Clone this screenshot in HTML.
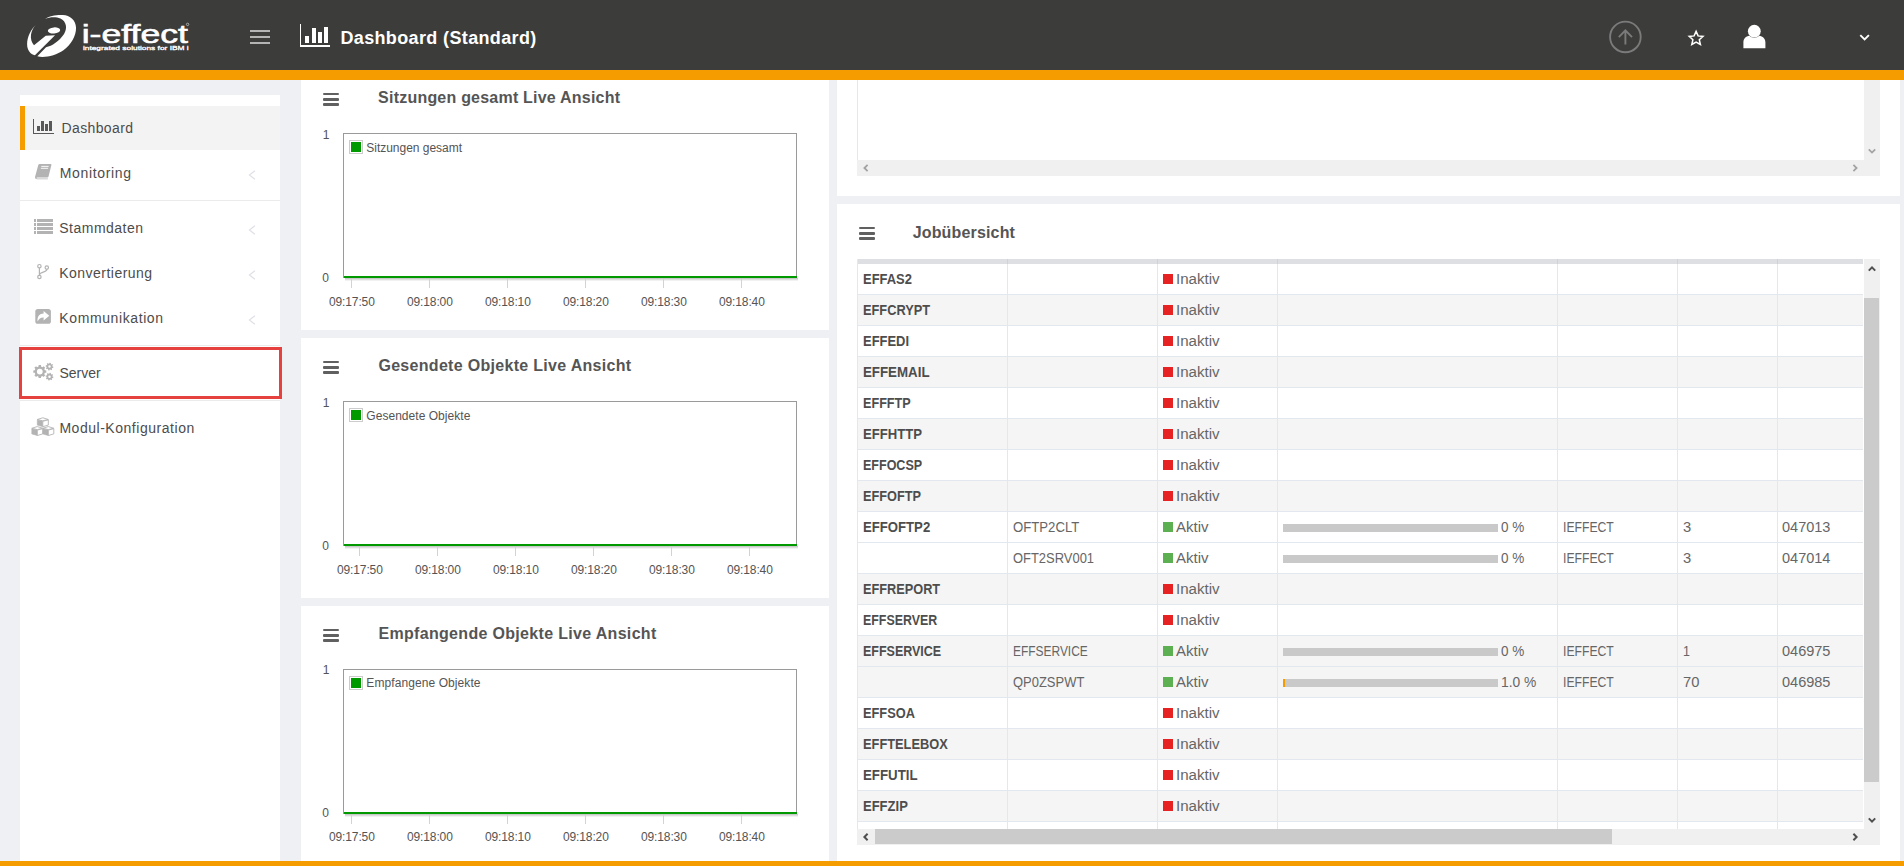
<!DOCTYPE html>
<html><head><meta charset="utf-8"><title>Dashboard (Standard)</title>
<style>
*{box-sizing:border-box;margin:0;padding:0}
html,body{width:1904px;height:866px;overflow:hidden}
body{background:#eff0f4;font-family:"Liberation Sans",sans-serif;position:relative;color:#555}
.abs{position:absolute}
#hdr{left:0;top:0;width:1904px;height:70px;background:#3c3c3b}
#ostripe{left:0;top:70px;width:1904px;height:10px;background:#f59c00}
#bstripe{left:0;top:861px;width:1904px;height:5px;background:#f59c00;z-index:50}
#side{left:20px;top:95px;width:260px;height:780px;background:#fff}
.panel{background:#fff}
.t{position:absolute;white-space:nowrap;line-height:1}
.nav{font-size:14px;color:#4c4c4c}
.ptitle{font-size:16px;font-weight:bold;color:#555}
.ax{font-size:12px;color:#545454}
.lg{font-size:12px;color:#545454}
.td{font-size:13px;color:#666}
.tb{font-size:13px;color:#4d4d4d;font-weight:bold}
.hb{position:absolute;height:2px;background:#606060;border-radius:1px}
</style></head><body>
<div id="hdr" class="abs"></div><div id="ostripe" class="abs"></div><div id="bstripe" class="abs"></div><div id="side" class="abs"></div><div class="abs" style="left:20px;top:106px;width:260px;height:44px;background:#f3f3f3"></div><div class="abs" style="left:20px;top:106px;width:5px;height:44px;background:#f59c00"></div><div class="abs" style="left:20px;top:200px;width:260px;height:1px;background:#ebebeb"></div><div class="abs" style="left:20px;top:345px;width:260px;height:1px;background:#ebebeb"></div><div class="abs" style="left:20px;top:400px;width:260px;height:1px;background:#ebebeb"></div><div class="abs" style="left:19px;top:347px;width:263px;height:52px;border:3px solid #e4413f"></div><div class="abs panel" style="left:301px;top:80px;width:528px;height:250px"></div><div class="abs panel" style="left:301px;top:338px;width:528px;height:260px"></div><div class="abs panel" style="left:301px;top:606px;width:528px;height:270px"></div><div class="abs panel" style="left:837px;top:80px;width:1063px;height:116px"></div><div class="abs panel" style="left:837px;top:204px;width:1063px;height:670px"></div><div class="t" style="left:340.40px;top:29.46px;font-size:18px;color:#fff;font-weight:bold;letter-spacing:0.364px;">Dashboard (Standard)</div><div class="abs" style="left:250px;top:30px;width:20px;height:2px;background:#b4b4b4"></div><div class="abs" style="left:250px;top:36px;width:20px;height:2px;background:#b4b4b4"></div><div class="abs" style="left:250px;top:42px;width:20px;height:2px;background:#b4b4b4"></div><div class="t" style="left:61.50px;top:121.15px;font-size:14px;color:#4c4c4c;letter-spacing:0.381px;">Dashboard</div><div class="t" style="left:59.80px;top:165.75px;font-size:14px;color:#4c4c4c;letter-spacing:0.652px;">Monitoring</div><div class="t" style="left:59.30px;top:220.85px;font-size:14px;color:#4c4c4c;letter-spacing:0.484px;">Stammdaten</div><div class="t" style="left:59.30px;top:265.65px;font-size:14px;color:#4c4c4c;letter-spacing:0.465px;">Konvertierung</div><div class="t" style="left:59.30px;top:310.85px;font-size:14px;color:#4c4c4c;letter-spacing:0.604px;">Kommunikation</div><div class="t" style="left:59.40px;top:365.85px;font-size:14px;color:#4c4c4c;">Server</div><div class="t" style="left:59.40px;top:420.85px;font-size:14px;color:#4c4c4c;letter-spacing:0.531px;">Modul-Konfiguration</div><div class="t" style="left:378.10px;top:90.46px;font-size:16px;color:#555;font-weight:bold;letter-spacing:0.215px;">Sitzungen gesamt Live Ansicht</div><div class="t" style="left:378.40px;top:358.46px;font-size:16px;color:#555;font-weight:bold;letter-spacing:0.305px;">Gesendete Objekte Live Ansicht</div><div class="t" style="left:378.40px;top:626.06px;font-size:16px;color:#555;font-weight:bold;letter-spacing:0.322px;">Empfangende Objekte Live Ansicht</div><div class="t" style="left:912.70px;top:224.86px;font-size:16px;color:#555;font-weight:bold;letter-spacing:0.159px;">Jobübersicht</div><div class="abs" style="left:323px;top:93.0px;width:16px;height:2.4px;background:#606060;border-radius:1px"></div><div class="abs" style="left:323px;top:98.2px;width:16px;height:2.4px;background:#606060;border-radius:1px"></div><div class="abs" style="left:323px;top:103.4px;width:16px;height:2.4px;background:#606060;border-radius:1px"></div><div class="abs" style="left:323px;top:361.0px;width:16px;height:2.4px;background:#606060;border-radius:1px"></div><div class="abs" style="left:323px;top:366.2px;width:16px;height:2.4px;background:#606060;border-radius:1px"></div><div class="abs" style="left:323px;top:371.4px;width:16px;height:2.4px;background:#606060;border-radius:1px"></div><div class="abs" style="left:323px;top:629.0px;width:16px;height:2.4px;background:#606060;border-radius:1px"></div><div class="abs" style="left:323px;top:634.2px;width:16px;height:2.4px;background:#606060;border-radius:1px"></div><div class="abs" style="left:323px;top:639.4px;width:16px;height:2.4px;background:#606060;border-radius:1px"></div><div class="abs" style="left:859px;top:227.0px;width:16px;height:2.4px;background:#606060;border-radius:1px"></div><div class="abs" style="left:859px;top:232.2px;width:16px;height:2.4px;background:#606060;border-radius:1px"></div><div class="abs" style="left:859px;top:237.4px;width:16px;height:2.4px;background:#606060;border-radius:1px"></div><div class="abs" style="left:343px;top:133px;width:454px;height:145px;border:1px solid #9a9a9a;border-bottom:none;background:#fff"></div><div class="abs" style="left:345px;top:278px;width:452.5px;height:3px;background:linear-gradient(rgba(0,0,0,0.26),rgba(0,0,0,0.10) 60%,rgba(0,0,0,0.02))"></div><div class="abs" style="left:344px;top:276px;width:452.5px;height:2px;background:#009900"></div><div class="abs" style="left:349px;top:140px;width:14px;height:14px;border:1px solid #ccc;padding:1px;background:#fff"><div style="width:10px;height:10px;background:#009900"></div></div><div class="t" style="left:366.30px;top:141.54px;font-size:12px;color:#545454;letter-spacing:-0.022px;">Sitzungen gesamt</div><div class="t" style="left:322.70px;top:129.14px;font-size:12px;color:#545454;">1</div><div class="t" style="left:322.20px;top:271.54px;font-size:12px;color:#545454;">0</div><div class="abs" style="left:351px;top:279px;width:1px;height:9px;background:#d3d3d3"></div><div class="t" style="left:329.00px;top:295.54px;font-size:12px;color:#545454;letter-spacing:-0.127px;">09:17:50</div><div class="abs" style="left:429px;top:279px;width:1px;height:9px;background:#d3d3d3"></div><div class="t" style="left:407.00px;top:295.54px;font-size:12px;color:#545454;letter-spacing:-0.127px;">09:18:00</div><div class="abs" style="left:507px;top:279px;width:1px;height:9px;background:#d3d3d3"></div><div class="t" style="left:485.00px;top:295.54px;font-size:12px;color:#545454;letter-spacing:-0.127px;">09:18:10</div><div class="abs" style="left:585px;top:279px;width:1px;height:9px;background:#d3d3d3"></div><div class="t" style="left:563.00px;top:295.54px;font-size:12px;color:#545454;letter-spacing:-0.127px;">09:18:20</div><div class="abs" style="left:663px;top:279px;width:1px;height:9px;background:#d3d3d3"></div><div class="t" style="left:641.00px;top:295.54px;font-size:12px;color:#545454;letter-spacing:-0.127px;">09:18:30</div><div class="abs" style="left:741px;top:279px;width:1px;height:9px;background:#d3d3d3"></div><div class="t" style="left:719.00px;top:295.54px;font-size:12px;color:#545454;letter-spacing:-0.127px;">09:18:40</div><div class="abs" style="left:343px;top:401px;width:454px;height:145px;border:1px solid #9a9a9a;border-bottom:none;background:#fff"></div><div class="abs" style="left:345px;top:546px;width:452.5px;height:3px;background:linear-gradient(rgba(0,0,0,0.26),rgba(0,0,0,0.10) 60%,rgba(0,0,0,0.02))"></div><div class="abs" style="left:344px;top:544px;width:452.5px;height:2px;background:#009900"></div><div class="abs" style="left:349px;top:408px;width:14px;height:14px;border:1px solid #ccc;padding:1px;background:#fff"><div style="width:10px;height:10px;background:#009900"></div></div><div class="t" style="left:366.30px;top:409.54px;font-size:12px;color:#545454;letter-spacing:0.040px;">Gesendete Objekte</div><div class="t" style="left:322.70px;top:397.14px;font-size:12px;color:#545454;">1</div><div class="t" style="left:322.20px;top:539.54px;font-size:12px;color:#545454;">0</div><div class="abs" style="left:359px;top:547px;width:1px;height:9px;background:#d3d3d3"></div><div class="t" style="left:337.00px;top:563.54px;font-size:12px;color:#545454;letter-spacing:-0.127px;">09:17:50</div><div class="abs" style="left:437px;top:547px;width:1px;height:9px;background:#d3d3d3"></div><div class="t" style="left:415.00px;top:563.54px;font-size:12px;color:#545454;letter-spacing:-0.127px;">09:18:00</div><div class="abs" style="left:515px;top:547px;width:1px;height:9px;background:#d3d3d3"></div><div class="t" style="left:493.00px;top:563.54px;font-size:12px;color:#545454;letter-spacing:-0.127px;">09:18:10</div><div class="abs" style="left:593px;top:547px;width:1px;height:9px;background:#d3d3d3"></div><div class="t" style="left:571.00px;top:563.54px;font-size:12px;color:#545454;letter-spacing:-0.127px;">09:18:20</div><div class="abs" style="left:671px;top:547px;width:1px;height:9px;background:#d3d3d3"></div><div class="t" style="left:649.00px;top:563.54px;font-size:12px;color:#545454;letter-spacing:-0.127px;">09:18:30</div><div class="abs" style="left:749px;top:547px;width:1px;height:9px;background:#d3d3d3"></div><div class="t" style="left:727.00px;top:563.54px;font-size:12px;color:#545454;letter-spacing:-0.127px;">09:18:40</div><div class="abs" style="left:343px;top:669px;width:454px;height:145px;border:1px solid #9a9a9a;border-bottom:none;background:#fff"></div><div class="abs" style="left:345px;top:814px;width:452.5px;height:3px;background:linear-gradient(rgba(0,0,0,0.26),rgba(0,0,0,0.10) 60%,rgba(0,0,0,0.02))"></div><div class="abs" style="left:344px;top:812px;width:452.5px;height:2px;background:#009900"></div><div class="abs" style="left:349px;top:676px;width:14px;height:14px;border:1px solid #ccc;padding:1px;background:#fff"><div style="width:10px;height:10px;background:#009900"></div></div><div class="t" style="left:366.30px;top:677.04px;font-size:12px;color:#545454;letter-spacing:0.088px;">Empfangene Objekte</div><div class="t" style="left:322.70px;top:664.14px;font-size:12px;color:#545454;">1</div><div class="t" style="left:322.20px;top:806.54px;font-size:12px;color:#545454;">0</div><div class="abs" style="left:351px;top:815px;width:1px;height:9px;background:#d3d3d3"></div><div class="t" style="left:329.00px;top:830.54px;font-size:12px;color:#545454;letter-spacing:-0.127px;">09:17:50</div><div class="abs" style="left:429px;top:815px;width:1px;height:9px;background:#d3d3d3"></div><div class="t" style="left:407.00px;top:830.54px;font-size:12px;color:#545454;letter-spacing:-0.127px;">09:18:00</div><div class="abs" style="left:507px;top:815px;width:1px;height:9px;background:#d3d3d3"></div><div class="t" style="left:485.00px;top:830.54px;font-size:12px;color:#545454;letter-spacing:-0.127px;">09:18:10</div><div class="abs" style="left:585px;top:815px;width:1px;height:9px;background:#d3d3d3"></div><div class="t" style="left:563.00px;top:830.54px;font-size:12px;color:#545454;letter-spacing:-0.127px;">09:18:20</div><div class="abs" style="left:663px;top:815px;width:1px;height:9px;background:#d3d3d3"></div><div class="t" style="left:641.00px;top:830.54px;font-size:12px;color:#545454;letter-spacing:-0.127px;">09:18:30</div><div class="abs" style="left:741px;top:815px;width:1px;height:9px;background:#d3d3d3"></div><div class="t" style="left:719.00px;top:830.54px;font-size:12px;color:#545454;letter-spacing:-0.127px;">09:18:40</div><div class="abs" style="left:857px;top:80px;width:1px;height:80px;background:#e6e6ee"></div><div class="abs" style="left:857px;top:160px;width:1023px;height:16px;background:#f0f0f0"></div><div class="abs" style="left:1864px;top:80px;width:16px;height:96px;background:#f0f0f0"></div><svg class="abs" style="left:858px;top:159.5px" width="16" height="16" viewBox="-8 -8 16 16"><polyline points="1.6,-3.2 -1.6,0 1.6,3.2" fill="none" stroke="#a3a3a3" stroke-width="1.8"/></svg><svg class="abs" style="left:1846.5px;top:159.5px" width="16" height="16" viewBox="-8 -8 16 16"><polyline points="-1.6,-3.2 1.6,0 -1.6,3.2" fill="none" stroke="#a3a3a3" stroke-width="1.8"/></svg><svg class="abs" style="left:1864px;top:143px" width="16" height="16" viewBox="-8 -8 16 16"><polyline points="-3.2,-1.6 0,1.6 3.2,-1.6" fill="none" stroke="#a3a3a3" stroke-width="1.8"/></svg><div class="abs" style="left:857px;top:259px;width:1006px;height:570px;overflow:hidden;background:#fff"><div class="abs" style="left:0;top:0;width:1006px;height:4.5px;background:#dddfe2"></div><div class="abs" style="left:0;top:4.5px;width:1006px;height:31px;background:#fff;border-bottom:1px solid #e2e8ee"></div><div class="abs" style="left:0;top:35.5px;width:1006px;height:31px;background:#f5f5f5;border-bottom:1px solid #e2e8ee"></div><div class="abs" style="left:0;top:66.5px;width:1006px;height:31px;background:#fff;border-bottom:1px solid #e2e8ee"></div><div class="abs" style="left:0;top:97.5px;width:1006px;height:31px;background:#f5f5f5;border-bottom:1px solid #e2e8ee"></div><div class="abs" style="left:0;top:128.5px;width:1006px;height:31px;background:#fff;border-bottom:1px solid #e2e8ee"></div><div class="abs" style="left:0;top:159.5px;width:1006px;height:31px;background:#f5f5f5;border-bottom:1px solid #e2e8ee"></div><div class="abs" style="left:0;top:190.5px;width:1006px;height:31px;background:#fff;border-bottom:1px solid #e2e8ee"></div><div class="abs" style="left:0;top:221.5px;width:1006px;height:31px;background:#f5f5f5;border-bottom:1px solid #e2e8ee"></div><div class="abs" style="left:0;top:252.5px;width:1006px;height:31px;background:#fff;border-bottom:1px solid #e2e8ee"></div><div class="abs" style="left:0;top:283.5px;width:1006px;height:31px;background:#fff;border-bottom:1px solid #e2e8ee"></div><div class="abs" style="left:0;top:314.5px;width:1006px;height:31px;background:#f5f5f5;border-bottom:1px solid #e2e8ee"></div><div class="abs" style="left:0;top:345.5px;width:1006px;height:31px;background:#fff;border-bottom:1px solid #e2e8ee"></div><div class="abs" style="left:0;top:376.5px;width:1006px;height:31px;background:#f5f5f5;border-bottom:1px solid #e2e8ee"></div><div class="abs" style="left:0;top:407.5px;width:1006px;height:31px;background:#f5f5f5;border-bottom:1px solid #e2e8ee"></div><div class="abs" style="left:0;top:438.5px;width:1006px;height:31px;background:#fff;border-bottom:1px solid #e2e8ee"></div><div class="abs" style="left:0;top:469.5px;width:1006px;height:31px;background:#f5f5f5;border-bottom:1px solid #e2e8ee"></div><div class="abs" style="left:0;top:500.5px;width:1006px;height:31px;background:#fff;border-bottom:1px solid #e2e8ee"></div><div class="abs" style="left:0;top:531.5px;width:1006px;height:31px;background:#f5f5f5;border-bottom:1px solid #e2e8ee"></div><div class="abs" style="left:0;top:562.5px;width:1006px;height:31px;background:#fff;border-bottom:1px solid #e2e8ee"></div><div class="abs" style="left:0px;top:0;width:1px;height:570px;background:#e2e8ee"></div><div class="abs" style="left:150px;top:0;width:1px;height:570px;background:#e2e8ee"></div><div class="abs" style="left:300px;top:0;width:1px;height:570px;background:#e2e8ee"></div><div class="abs" style="left:420px;top:0;width:1px;height:570px;background:#e2e8ee"></div><div class="abs" style="left:700px;top:0;width:1px;height:570px;background:#e2e8ee"></div><div class="abs" style="left:820px;top:0;width:1px;height:570px;background:#e2e8ee"></div><div class="abs" style="left:920px;top:0;width:1px;height:570px;background:#e2e8ee"></div><div class="abs" style="left:150px;top:0;width:1px;height:4.5px;background:#cfd3d8"></div><div class="abs" style="left:300px;top:0;width:1px;height:4.5px;background:#cfd3d8"></div><div class="abs" style="left:420px;top:0;width:1px;height:4.5px;background:#cfd3d8"></div><div class="abs" style="left:700px;top:0;width:1px;height:4.5px;background:#cfd3d8"></div><div class="abs" style="left:820px;top:0;width:1px;height:4.5px;background:#cfd3d8"></div><div class="abs" style="left:920px;top:0;width:1px;height:4.5px;background:#cfd3d8"></div></div><div class="t" style="left:862.80px;top:271.95px;font-size:14px;color:#4d4d4d;transform-origin:0 0;transform:scaleX(0.9243);font-weight:bold;">EFFAS2</div><div class="abs" style="left:1163px;top:273.8px;width:10px;height:10px;background:#e62222"></div><div class="t" style="left:1176.30px;top:271.95px;font-size:14px;color:#666;transform-origin:0 0;transform:scaleX(1.0778);">Inaktiv</div><div class="t" style="left:862.80px;top:302.95px;font-size:14px;color:#4d4d4d;transform-origin:0 0;transform:scaleX(0.9145);font-weight:bold;">EFFCRYPT</div><div class="abs" style="left:1163px;top:304.8px;width:10px;height:10px;background:#e62222"></div><div class="t" style="left:1176.30px;top:302.95px;font-size:14px;color:#666;transform-origin:0 0;transform:scaleX(1.0778);">Inaktiv</div><div class="t" style="left:862.80px;top:333.95px;font-size:14px;color:#4d4d4d;transform-origin:0 0;transform:scaleX(0.9240);font-weight:bold;">EFFEDI</div><div class="abs" style="left:1163px;top:335.8px;width:10px;height:10px;background:#e62222"></div><div class="t" style="left:1176.30px;top:333.95px;font-size:14px;color:#666;transform-origin:0 0;transform:scaleX(1.0778);">Inaktiv</div><div class="t" style="left:862.80px;top:364.95px;font-size:14px;color:#4d4d4d;transform-origin:0 0;transform:scaleX(0.9502);font-weight:bold;">EFFEMAIL</div><div class="abs" style="left:1163px;top:366.8px;width:10px;height:10px;background:#e62222"></div><div class="t" style="left:1176.30px;top:364.95px;font-size:14px;color:#666;transform-origin:0 0;transform:scaleX(1.0778);">Inaktiv</div><div class="t" style="left:862.80px;top:395.95px;font-size:14px;color:#4d4d4d;transform-origin:0 0;transform:scaleX(0.9021);font-weight:bold;">EFFFTP</div><div class="abs" style="left:1163px;top:397.8px;width:10px;height:10px;background:#e62222"></div><div class="t" style="left:1176.30px;top:395.95px;font-size:14px;color:#666;transform-origin:0 0;transform:scaleX(1.0778);">Inaktiv</div><div class="t" style="left:862.80px;top:426.95px;font-size:14px;color:#4d4d4d;transform-origin:0 0;transform:scaleX(0.9367);font-weight:bold;">EFFHTTP</div><div class="abs" style="left:1163px;top:428.8px;width:10px;height:10px;background:#e62222"></div><div class="t" style="left:1176.30px;top:426.95px;font-size:14px;color:#666;transform-origin:0 0;transform:scaleX(1.0778);">Inaktiv</div><div class="t" style="left:862.80px;top:457.95px;font-size:14px;color:#4d4d4d;transform-origin:0 0;transform:scaleX(0.8938);font-weight:bold;">EFFOCSP</div><div class="abs" style="left:1163px;top:459.8px;width:10px;height:10px;background:#e62222"></div><div class="t" style="left:1176.30px;top:457.95px;font-size:14px;color:#666;transform-origin:0 0;transform:scaleX(1.0778);">Inaktiv</div><div class="t" style="left:862.80px;top:488.95px;font-size:14px;color:#4d4d4d;transform-origin:0 0;transform:scaleX(0.9096);font-weight:bold;">EFFOFTP</div><div class="abs" style="left:1163px;top:490.8px;width:10px;height:10px;background:#e62222"></div><div class="t" style="left:1176.30px;top:488.95px;font-size:14px;color:#666;transform-origin:0 0;transform:scaleX(1.0778);">Inaktiv</div><div class="t" style="left:862.80px;top:519.95px;font-size:14px;color:#4d4d4d;transform-origin:0 0;transform:scaleX(0.9392);font-weight:bold;">EFFOFTP2</div><div class="abs" style="left:1163px;top:521.8px;width:10px;height:10px;background:#5cb052"></div><div class="t" style="left:1175.90px;top:519.95px;font-size:14px;color:#666;transform-origin:0 0;transform:scaleX(1.0711);">Aktiv</div><div class="t" style="left:1012.80px;top:519.95px;font-size:14px;color:#666;transform-origin:0 0;transform:scaleX(0.9402);">OFTP2CLT</div><div class="abs" style="left:1283px;top:523.7px;width:215px;height:8px;background:#c9c9c9"></div><div class="t" style="left:1501.10px;top:519.95px;font-size:14px;color:#666;transform-origin:0 0;transform:scaleX(0.9658);">0 %</div><div class="t" style="left:1562.60px;top:519.95px;font-size:14px;color:#666;transform-origin:0 0;transform:scaleX(0.8709);">IEFFECT</div><div class="t" style="left:1682.50px;top:519.95px;font-size:14px;color:#666;transform-origin:0 0;transform:scaleX(1.0538);">3</div><div class="t" style="left:1782.30px;top:519.95px;font-size:14px;color:#666;transform-origin:0 0;transform:scaleX(1.0367);">047013</div><div class="abs" style="left:1163px;top:552.8px;width:10px;height:10px;background:#5cb052"></div><div class="t" style="left:1175.90px;top:550.95px;font-size:14px;color:#666;transform-origin:0 0;transform:scaleX(1.0711);">Aktiv</div><div class="t" style="left:1012.80px;top:550.95px;font-size:14px;color:#666;transform-origin:0 0;transform:scaleX(0.9241);">OFT2SRV001</div><div class="abs" style="left:1283px;top:554.7px;width:215px;height:8px;background:#c9c9c9"></div><div class="t" style="left:1501.10px;top:550.95px;font-size:14px;color:#666;transform-origin:0 0;transform:scaleX(0.9658);">0 %</div><div class="t" style="left:1562.60px;top:550.95px;font-size:14px;color:#666;transform-origin:0 0;transform:scaleX(0.8709);">IEFFECT</div><div class="t" style="left:1682.50px;top:550.95px;font-size:14px;color:#666;transform-origin:0 0;transform:scaleX(1.0538);">3</div><div class="t" style="left:1782.30px;top:550.95px;font-size:14px;color:#666;transform-origin:0 0;transform:scaleX(1.0367);">047014</div><div class="t" style="left:862.80px;top:581.95px;font-size:14px;color:#4d4d4d;transform-origin:0 0;transform:scaleX(0.9094);font-weight:bold;">EFFREPORT</div><div class="abs" style="left:1163px;top:583.8px;width:10px;height:10px;background:#e62222"></div><div class="t" style="left:1176.30px;top:581.95px;font-size:14px;color:#666;transform-origin:0 0;transform:scaleX(1.0778);">Inaktiv</div><div class="t" style="left:862.80px;top:612.95px;font-size:14px;color:#4d4d4d;transform-origin:0 0;transform:scaleX(0.8856);font-weight:bold;">EFFSERVER</div><div class="abs" style="left:1163px;top:614.8px;width:10px;height:10px;background:#e62222"></div><div class="t" style="left:1176.30px;top:612.95px;font-size:14px;color:#666;transform-origin:0 0;transform:scaleX(1.0778);">Inaktiv</div><div class="t" style="left:862.80px;top:643.95px;font-size:14px;color:#4d4d4d;transform-origin:0 0;transform:scaleX(0.8920);font-weight:bold;">EFFSERVICE</div><div class="abs" style="left:1163px;top:645.8px;width:10px;height:10px;background:#5cb052"></div><div class="t" style="left:1175.90px;top:643.95px;font-size:14px;color:#666;transform-origin:0 0;transform:scaleX(1.0711);">Aktiv</div><div class="t" style="left:1012.80px;top:643.95px;font-size:14px;color:#666;transform-origin:0 0;transform:scaleX(0.8532);">EFFSERVICE</div><div class="abs" style="left:1283px;top:647.7px;width:215px;height:8px;background:#c9c9c9"></div><div class="t" style="left:1501.10px;top:643.95px;font-size:14px;color:#666;transform-origin:0 0;transform:scaleX(0.9658);">0 %</div><div class="t" style="left:1562.60px;top:643.95px;font-size:14px;color:#666;transform-origin:0 0;transform:scaleX(0.8709);">IEFFECT</div><div class="t" style="left:1682.50px;top:643.95px;font-size:14px;color:#666;transform-origin:0 0;transform:scaleX(0.8867);">1</div><div class="t" style="left:1782.30px;top:643.95px;font-size:14px;color:#666;transform-origin:0 0;transform:scaleX(1.0367);">046975</div><div class="abs" style="left:1163px;top:676.8px;width:10px;height:10px;background:#5cb052"></div><div class="t" style="left:1175.90px;top:674.95px;font-size:14px;color:#666;transform-origin:0 0;transform:scaleX(1.0711);">Aktiv</div><div class="t" style="left:1012.80px;top:674.95px;font-size:14px;color:#666;transform-origin:0 0;transform:scaleX(0.9258);">QP0ZSPWT</div><div class="abs" style="left:1283px;top:678.7px;width:215px;height:8px;background:#c9c9c9"></div><div class="abs" style="left:1283px;top:678.7px;width:2px;height:8px;background:#f59c00"></div><div class="t" style="left:1501.10px;top:674.95px;font-size:14px;color:#666;transform-origin:0 0;transform:scaleX(0.9861);">1.0 %</div><div class="t" style="left:1562.60px;top:674.95px;font-size:14px;color:#666;transform-origin:0 0;transform:scaleX(0.8709);">IEFFECT</div><div class="t" style="left:1682.50px;top:674.95px;font-size:14px;color:#666;transform-origin:0 0;transform:scaleX(1.0538);">70</div><div class="t" style="left:1782.30px;top:674.95px;font-size:14px;color:#666;transform-origin:0 0;transform:scaleX(1.0367);">046985</div><div class="t" style="left:862.80px;top:705.95px;font-size:14px;color:#4d4d4d;transform-origin:0 0;transform:scaleX(0.9140);font-weight:bold;">EFFSOA</div><div class="abs" style="left:1163px;top:707.8px;width:10px;height:10px;background:#e62222"></div><div class="t" style="left:1176.30px;top:705.95px;font-size:14px;color:#666;transform-origin:0 0;transform:scaleX(1.0778);">Inaktiv</div><div class="t" style="left:862.80px;top:736.95px;font-size:14px;color:#4d4d4d;transform-origin:0 0;transform:scaleX(0.9161);font-weight:bold;">EFFTELEBOX</div><div class="abs" style="left:1163px;top:738.8px;width:10px;height:10px;background:#e62222"></div><div class="t" style="left:1176.30px;top:736.95px;font-size:14px;color:#666;transform-origin:0 0;transform:scaleX(1.0778);">Inaktiv</div><div class="t" style="left:862.80px;top:767.95px;font-size:14px;color:#4d4d4d;transform-origin:0 0;transform:scaleX(0.9473);font-weight:bold;">EFFUTIL</div><div class="abs" style="left:1163px;top:769.8px;width:10px;height:10px;background:#e62222"></div><div class="t" style="left:1176.30px;top:767.95px;font-size:14px;color:#666;transform-origin:0 0;transform:scaleX(1.0778);">Inaktiv</div><div class="t" style="left:862.80px;top:798.95px;font-size:14px;color:#4d4d4d;transform-origin:0 0;transform:scaleX(0.9291);font-weight:bold;">EFFZIP</div><div class="abs" style="left:1163px;top:800.8px;width:10px;height:10px;background:#e62222"></div><div class="t" style="left:1176.30px;top:798.95px;font-size:14px;color:#666;transform-origin:0 0;transform:scaleX(1.0778);">Inaktiv</div><div class="abs" style="left:1864px;top:259px;width:16px;height:586px;background:#f0f0f0"></div><div class="abs" style="left:857px;top:829px;width:1023px;height:16px;background:#f0f0f0"></div><div class="abs" style="left:1864px;top:298px;width:15px;height:484px;background:#cbcbcb"></div><div class="abs" style="left:875px;top:829px;width:737px;height:14.6px;background:#cbcbcb"></div><svg class="abs" style="left:1864px;top:260.5px" width="16" height="16" viewBox="-8 -8 16 16"><polyline points="-3.2,1.6 0,-1.6 3.2,1.6" fill="none" stroke="#4f4f4f" stroke-width="2"/></svg><svg class="abs" style="left:1864px;top:811.5px" width="16" height="16" viewBox="-8 -8 16 16"><polyline points="-3.2,-1.6 0,1.6 3.2,-1.6" fill="none" stroke="#4f4f4f" stroke-width="2"/></svg><svg class="abs" style="left:858px;top:828.5px" width="16" height="16" viewBox="-8 -8 16 16"><polyline points="1.6,-3.2 -1.6,0 1.6,3.2" fill="none" stroke="#4f4f4f" stroke-width="2"/></svg><svg class="abs" style="left:1846.5px;top:828.5px" width="16" height="16" viewBox="-8 -8 16 16"><polyline points="-1.6,-3.2 1.6,0 -1.6,3.2" fill="none" stroke="#4f4f4f" stroke-width="2"/></svg><svg class="abs" style="left:22px;top:10px" width="60" height="52" viewBox="0 0 999 866">
<g fill="#fff">
<path d="M385,145 C450,108 560,80 680,85 C800,90 900,170 900,300 C900,430 820,580 690,670 C560,760 380,800 255,772 L400,620 C500,600 620,520 700,400 C760,300 740,190 640,140 C560,105 450,120 385,145 Z"/>
<path d="M230,250 C150,320 85,450 85,570 C85,670 140,735 215,755 L550,420 L395,428 L200,585 C160,550 140,480 150,410 C160,340 195,285 230,250 Z"/>
<ellipse cx="533" cy="340" rx="103" ry="50" transform="rotate(-5 533 340)"/>
</g></svg><svg class="abs" style="left:78px;top:18px" width="116" height="36" viewBox="78 18 116 36">
<text x="81.7" y="42.5" font-family="Liberation Sans, sans-serif" font-size="25" fill="#fff" stroke="#fff" stroke-width="0.6" textLength="106.2" lengthAdjust="spacingAndGlyphs">i-effect</text>
<text x="82.9" y="50" font-family="Liberation Sans, sans-serif" font-size="6" fill="#fff" stroke="#fff" stroke-width="0.3" textLength="105.8" lengthAdjust="spacingAndGlyphs">integrated solutions for IBM i</text>
<circle cx="187.6" cy="24.4" r="1.2" fill="none" stroke="#fff" stroke-width="0.5"/>
</svg><div class="abs" style="left:299.7px;top:24.2px;width:1.7px;height:22.7px;background:#fff"></div><div class="abs" style="left:299.7px;top:45.199999999999996px;width:30.3px;height:1.7px;background:#fff"></div><div class="abs" style="left:304.9px;top:36px;width:4.50px;height:6.90px;background:#fff"></div><div class="abs" style="left:311.5px;top:28.2px;width:4.30px;height:14.70px;background:#fff"></div><div class="abs" style="left:317.5px;top:31.7px;width:4.40px;height:11.20px;background:#fff"></div><div class="abs" style="left:323.6px;top:26.5px;width:4.20px;height:16.40px;background:#fff"></div><div class="abs" style="left:32.9px;top:119px;width:1.3px;height:14.8px;background:#585858"></div><div class="abs" style="left:32.9px;top:132.5px;width:20.9px;height:1.3px;background:#585858"></div><div class="abs" style="left:37.1px;top:126.3px;width:2.80px;height:5.10px;background:#585858"></div><div class="abs" style="left:40.8px;top:121.4px;width:2.90px;height:10.00px;background:#585858"></div><div class="abs" style="left:45.0px;top:123.7px;width:2.80px;height:7.70px;background:#585858"></div><div class="abs" style="left:48.9px;top:120.6px;width:2.90px;height:10.80px;background:#585858"></div><svg class="abs" style="left:1600px;top:12px" width="290" height="50" viewBox="1600 12 290 50">
<circle cx="1625.4" cy="36.9" r="15.3" fill="none" stroke="#7b7b7b" stroke-width="1.9"/>
<path d="M1625.4,44.4 V30.6 M1618.8,37.2 L1625.4,30.4 L1632,37.2" fill="none" stroke="#7b7b7b" stroke-width="1.9"/>
<path d="M1696.1,31.4 L1698.1,35.9 L1703,36.4 L1699.3,39.7 L1700.4,44.5 L1696.1,42 L1691.8,44.5 L1692.9,39.7 L1689.2,36.4 L1694.1,35.9 Z" fill="none" stroke="#fff" stroke-width="1.5" stroke-linejoin="miter"/>
<circle cx="1754.3" cy="31.2" r="6.4" fill="#fff"/>
<path d="M1743.4,48.2 V42.5 C1743.4,38.5 1746,36.2 1749.3,35.8 C1750.7,37 1752.4,37.7 1754.3,37.7 C1756.2,37.7 1757.9,37 1759.3,35.8 C1762.6,36.2 1765.4,38.5 1765.4,42.5 V48.2 Z" fill="#fff"/>
<path d="M1860.3,35.2 L1864.6,39.5 L1868.9,35.2" fill="none" stroke="#fff" stroke-width="1.9"/>
</svg><svg class="abs" style="left:244px;top:166.6px" width="16" height="16" viewBox="-8 -8 16 16"><polyline points="2.9,-4.3 -2.6,0 2.9,4.3" fill="none" stroke="#dfdfe6" stroke-width="1.15"/></svg><svg class="abs" style="left:244px;top:221.7px" width="16" height="16" viewBox="-8 -8 16 16"><polyline points="2.9,-4.3 -2.6,0 2.9,4.3" fill="none" stroke="#dfdfe6" stroke-width="1.15"/></svg><svg class="abs" style="left:244px;top:266.5px" width="16" height="16" viewBox="-8 -8 16 16"><polyline points="2.9,-4.3 -2.6,0 2.9,4.3" fill="none" stroke="#dfdfe6" stroke-width="1.15"/></svg><svg class="abs" style="left:244px;top:311.7px" width="16" height="16" viewBox="-8 -8 16 16"><polyline points="2.9,-4.3 -2.6,0 2.9,4.3" fill="none" stroke="#dfdfe6" stroke-width="1.15"/></svg><svg class="abs" style="left:33px;top:162px" width="22" height="20" viewBox="33 162 22 20">
<path d="M39.6,164 H50.6 Q51.7,164 51.4,165.1 L48.6,176.2 Q48.3,177.4 47.2,177.4 H37.4 Q36.4,177.4 36.4,178 Q36.4,178.5 37.4,178.5 H47.8 L48,179.2 H37 Q35,179.2 35,177.6 Q35,176.9 35.3,176 L38.2,165.2 Q38.5,164 39.6,164 Z" fill="#b3b3b3"/>
<path d="M41.3,166.4 H48.6 M40.9,168.3 H48.1" stroke="#fff" stroke-width="0.9"/>
</svg><div class="abs" style="left:34px;top:219.0px;width:2.2px;height:2.6px;background:#b3b3b3"></div><div class="abs" style="left:37.4px;top:219.0px;width:15.3px;height:2.6px;background:#b3b3b3"></div><div class="abs" style="left:34px;top:223.0px;width:2.2px;height:2.6px;background:#b3b3b3"></div><div class="abs" style="left:37.4px;top:223.0px;width:15.3px;height:2.6px;background:#b3b3b3"></div><div class="abs" style="left:34px;top:227.0px;width:2.2px;height:2.6px;background:#b3b3b3"></div><div class="abs" style="left:37.4px;top:227.0px;width:15.3px;height:2.6px;background:#b3b3b3"></div><div class="abs" style="left:34px;top:231.0px;width:2.2px;height:2.6px;background:#b3b3b3"></div><div class="abs" style="left:37.4px;top:231.0px;width:15.3px;height:2.6px;background:#b3b3b3"></div><svg class="abs" style="left:34px;top:262px" width="18" height="20" viewBox="34 262 18 20" fill="none" stroke="#b3b3b3" stroke-width="1.2">
<circle cx="39.4" cy="266.2" r="1.7"/><circle cx="46.8" cy="267.6" r="1.7"/><circle cx="39.4" cy="277" r="1.7"/>
<path d="M39.4,268 V275.2 M46.8,269.4 C46.8,272.6 39.6,271.6 39.4,275"/>
</svg><svg class="abs" style="left:34px;top:307px" width="20" height="20" viewBox="34 307 20 20">
<rect x="35.3" y="309" width="15.6" height="14.8" rx="2.6" fill="#b3b3b3"/>
<path d="M37.6,321.6 C37.0,316.4 39.6,313.6 43.6,313.6 V311.0 L49.3,315.7 L43.6,320.4 V317.6 C40.8,317.5 38.9,318.6 37.6,321.6 Z" fill="#fff"/>
</svg><svg class="abs" style="left:32px;top:361px" width="23" height="21" viewBox="32 361 23 21"><path fill-rule="evenodd" fill="#b3b3b3" d="M46.29,370.41 L46.29,372.79 L44.85,372.85 L44.25,374.28 L45.23,375.35 L43.55,377.03 L42.48,376.05 L41.05,376.65 L40.99,378.09 L38.61,378.09 L38.55,376.65 L37.12,376.05 L36.05,377.03 L34.37,375.35 L35.35,374.28 L34.75,372.85 L33.31,372.79 L33.31,370.41 L34.75,370.35 L35.35,368.92 L34.37,367.85 L36.05,366.17 L37.12,367.15 L38.55,366.55 L38.61,365.11 L40.99,365.11 L41.05,366.55 L42.48,367.15 L43.55,366.17 L45.23,367.85 L44.25,368.92 L44.85,370.35 Z M42.70,371.60 A2.9,2.9 0 1,0 36.90,371.60 A2.9,2.9 0 1,0 42.70,371.60 Z"/><path fill-rule="evenodd" fill="#b3b3b3" d="M53.40,366.68 L53.12,368.05 L52.21,367.89 L51.71,368.63 L52.20,369.41 L51.04,370.18 L50.51,369.43 L49.63,369.60 L49.42,370.50 L48.05,370.22 L48.21,369.31 L47.47,368.81 L46.69,369.30 L45.92,368.14 L46.67,367.61 L46.50,366.73 L45.60,366.52 L45.88,365.15 L46.79,365.31 L47.29,364.57 L46.80,363.79 L47.96,363.02 L48.49,363.77 L49.37,363.60 L49.58,362.70 L50.95,362.98 L50.79,363.89 L51.53,364.39 L52.31,363.90 L53.08,365.06 L52.33,365.59 L52.50,366.47 Z M50.75,366.60 A1.25,1.25 0 1,0 48.25,366.60 A1.25,1.25 0 1,0 50.75,366.60 Z"/><path fill-rule="evenodd" fill="#b3b3b3" d="M53.40,376.78 L53.12,378.15 L52.21,377.99 L51.71,378.73 L52.20,379.51 L51.04,380.28 L50.51,379.53 L49.63,379.70 L49.42,380.60 L48.05,380.32 L48.21,379.41 L47.47,378.91 L46.69,379.40 L45.92,378.24 L46.67,377.71 L46.50,376.83 L45.60,376.62 L45.88,375.25 L46.79,375.41 L47.29,374.67 L46.80,373.89 L47.96,373.12 L48.49,373.87 L49.37,373.70 L49.58,372.80 L50.95,373.08 L50.79,373.99 L51.53,374.49 L52.31,374.00 L53.08,375.16 L52.33,375.69 L52.50,376.57 Z M50.75,376.70 A1.25,1.25 0 1,0 48.25,376.70 A1.25,1.25 0 1,0 50.75,376.70 Z"/></svg><svg class="abs" style="left:30px;top:415px" width="26" height="23" viewBox="30 415 26 23"><path d="M42.8,417.77500000000003 L48.3,419.4875 L42.8,420.8 L37.3,419.4875 Z" fill="#fff" stroke="#b3b3b3" stroke-width="0.9" stroke-linejoin="round"/><path d="M37.3,419.88750000000005 L42.8,421.3 L42.8,426.7 L37.3,425.08750000000003 Z" fill="#b3b3b3" stroke="#b3b3b3" stroke-width="0.6" stroke-linejoin="round"/><path d="M48.3,419.88750000000005 L42.8,421.3 L42.8,426.7 L48.3,425.08750000000003 Z" fill="#fff" stroke="#b3b3b3" stroke-width="0.9" stroke-linejoin="round"/><path d="M37.3,426.57500000000005 L42.8,428.2875 L37.3,429.6 L31.799999999999997,428.2875 Z" fill="#fff" stroke="#b3b3b3" stroke-width="0.9" stroke-linejoin="round"/><path d="M31.799999999999997,428.68750000000006 L37.3,430.1 L37.3,435.5 L31.799999999999997,433.88750000000005 Z" fill="#b3b3b3" stroke="#b3b3b3" stroke-width="0.6" stroke-linejoin="round"/><path d="M42.8,428.68750000000006 L37.3,430.1 L37.3,435.5 L42.8,433.88750000000005 Z" fill="#fff" stroke="#b3b3b3" stroke-width="0.9" stroke-linejoin="round"/><path d="M48.3,426.57500000000005 L53.8,428.2875 L48.3,429.6 L42.8,428.2875 Z" fill="#fff" stroke="#b3b3b3" stroke-width="0.9" stroke-linejoin="round"/><path d="M42.8,428.68750000000006 L48.3,430.1 L48.3,435.5 L42.8,433.88750000000005 Z" fill="#b3b3b3" stroke="#b3b3b3" stroke-width="0.6" stroke-linejoin="round"/><path d="M53.8,428.68750000000006 L48.3,430.1 L48.3,435.5 L53.8,433.88750000000005 Z" fill="#fff" stroke="#b3b3b3" stroke-width="0.9" stroke-linejoin="round"/></svg>
</body></html>
